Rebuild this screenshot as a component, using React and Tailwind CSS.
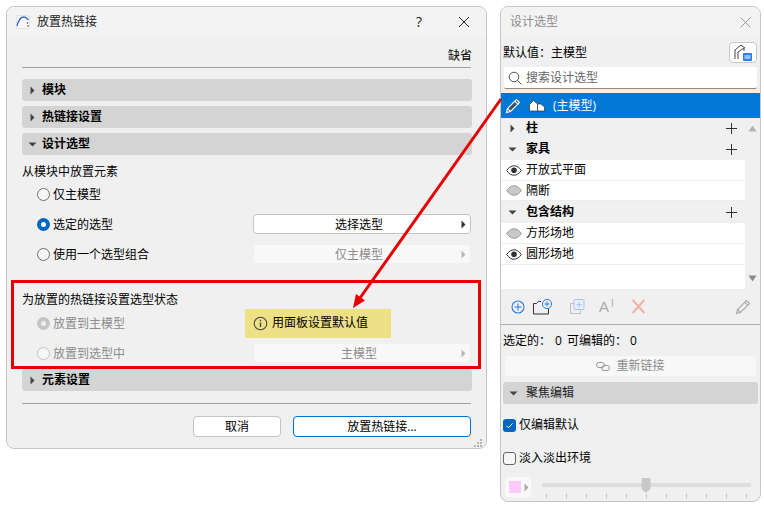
import React from 'react';

const Tri = ({ down, className = 'fill-[#444]' }) => (
  <svg width="9" height="9" viewBox="0 0 9 9" className={`shrink-0 ${className}`}>
    {down ? <path d="M0.5 2.5h8L4.5 6.5z" /> : <path d="M2.5 0.5v8L6.5 4.5z" />}
  </svg>
);

const Section = ({ title, down }) => (
  <div className="h-[22px] -mr-[1px] rounded-[3px] bg-[#d4d4d4] flex items-center pl-[6px] gap-[5px] font-bold text-black">
    <Tri down={down} />
    <span>{title}</span>
  </div>
);

const Radio = ({ checked, disabled, filled, label }) => (
  <div className={`flex items-center gap-[3px] pl-[15px] ${disabled ? 'text-[#8c8c8c]' : 'text-black'}`}>
    {checked ? (
      <span className="w-[13px] h-[13px] rounded-full bg-[#0067c0] flex items-center justify-center">
        <span className="w-[5px] h-[5px] rounded-full bg-white" />
      </span>
    ) : filled ? (
      <span className="w-[13px] h-[13px] rounded-full bg-[#c4c4c4] flex items-center justify-center">
        <span className="w-[5px] h-[5px] rounded-full bg-[#eeeeee]" />
      </span>
    ) : (
      <span className={`w-[13px] h-[13px] rounded-full border bg-[#f6f6f6] ${disabled ? 'border-[#c4c4c4]' : 'border-[#6e6e6e]'}`} />
    )}
    <span className="pt-[1px]">{label}</span>
  </div>
);

const Picker = ({ label, disabled }) => (
  <div
    className={`w-[218px] h-[20px] rounded-[4px] border flex items-center relative justify-center ${
      disabled ? 'bg-[#f8f8f8] border-[#f0f0f0] text-[#8c8c8c]' : 'bg-white border-[#c4c4c4] text-black'
    }`}
  >
    <span className="pr-[6px] pt-[1px]">{label}</span>
    <span className="absolute right-[2px] top-[5px]">
      <Tri className={disabled ? 'fill-[#b8b8b8]' : 'fill-[#333]'} />
    </span>
  </div>
);

const Eye = () => (
  <svg width="16" height="11" viewBox="0 0 16 11" fill="none" className="shrink-0">
    <path d="M0.7 5.5C3 2 5.5 0.8 8 0.8s5 1.2 7.3 4.7C13 9 10.5 10.2 8 10.2S3 9 0.7 5.5z" stroke="#333" strokeWidth="1" fill="#fff" />
    <circle cx="8" cy="5.3" r="2.8" fill="#333" />
  </svg>
);

const EyeOff = () => (
  <svg width="16" height="11" viewBox="0 0 16 11" className="shrink-0">
    <path d="M0.7 5.5C3 2 5.5 0.8 8 0.8s5 1.2 7.3 4.7C13 9 10.5 10.2 8 10.2S3 9 0.7 5.5z" stroke="#9a9a9a" strokeWidth="1" fill="#c8c8c8" />
  </svg>
);

const Plus = () => (
  <svg width="11" height="11" viewBox="0 0 11 11" stroke="#333" strokeWidth="1" className="shrink-0">
    <path d="M5.5 0v11M0 5.5h11" />
  </svg>
);

const GroupRow = ({ title, down, h }) => (
  <div className={`flex items-center bg-[#f0f0f0] font-bold text-black pl-[7px] pr-[8px] ${h}`}>
    <Tri down={down} />
    <span className="ml-[9px] flex-1">{title}</span>
    <Plus />
  </div>
);

const ItemRow = ({ title, on, h }) => (
  <div className={`flex items-center bg-white border-b border-[#ececec] text-black pl-[5px] ${h}`}>
    {on ? <Eye /> : <EyeOff />}
    <span className="ml-[4px]">{title}</span>
  </div>
);

const Pencil = ({ color = '#fff', fill = 'none' }) => (
  <svg width="16" height="16" viewBox="0 0 16 16" fill={fill} stroke={color} strokeWidth="1.1" className="shrink-0">
    <path d="M1.5 14.5l1-4L11.5 1.5l3 3-9 9z" />
    <path d="M9.8 3.2l3 3M2.5 10.5l3 3" />
  </svg>
);

export default function App() {
  return (
    <div className="relative w-[764px] h-[507px] overflow-hidden bg-white flex items-start gap-[13px] pt-[6px] pl-[6px] text-[12px] leading-[16px] font-['Open_Sans','Noto_Sans_CJK_SC',sans-serif]">
      {/* dialog */}
      <div className="w-[481px] h-[443px] shrink-0 rounded-[8px] border border-[#c6c6c6] bg-[#f0f0f0] overflow-hidden flex flex-col">
        <div className="h-[30px] bg-[#f3f3f3] flex items-center pl-[9px] pr-[16px]">
          <svg width="14" height="14" viewBox="0 0 14 14" fill="none" className="shrink-0">
            <rect x="0.5" y="0.5" width="13" height="13" rx="1.5" fill="#fafafa" stroke="#e2e2e2" />
            <path d="M1 11C2.5 5 5 2 8 2c2.5 0 3.5 2 4.5 3" stroke="#3a66c8" strokeWidth="1.3" />
            <circle cx="11.5" cy="8" r="0.7" fill="#222" />
            <circle cx="12" cy="11" r="0.7" fill="#222" />
          </svg>
          <span className="ml-[7px] flex-1 text-[#222]">放置热链接</span>
          <span className="text-[14px] text-[#222] mr-[36px]">?</span>
          <svg width="12" height="12" viewBox="0 0 12 12" stroke="#222" strokeWidth="1">
            <path d="M1 1l10 10M11 1L1 11" />
          </svg>
        </div>
        <div className="flex-1 flex flex-col px-[15px] min-h-0">
          <div className="h-[31px] shrink-0 border-b border-[#a0a0a0] flex items-end justify-end pb-[3px] text-black">
            <span className="-mr-[1px]">缺省</span>
          </div>
          <div className="mt-[11px] flex flex-col gap-[5px]">
            <Section title="模块" />
            <Section title="热链接设置" />
            <Section title="设计选型" down />
          </div>
          <div className="mt-[9px] h-[15px] text-black">从模块中放置元素</div>
          <div className="h-[30px] flex items-center">
            <Radio label="仅主模型" />
          </div>
          <div className="h-[30px] flex items-center justify-between">
            <Radio checked label="选定的选型" />
            <Picker label="选择选型" />
          </div>
          <div className="h-[30px] flex items-center justify-between">
            <Radio label="使用一个选型组合" />
            <Picker label="仅主模型" disabled />
          </div>
          <div className="mt-[23px] h-[16px] text-black">为放置的热链接设置选型状态</div>
          <div className="h-[30px] flex items-center">
            <div className="w-[223px] shrink-0">
              <Radio filled disabled label="放置到主模型" />
            </div>
            <div className="w-[146px] h-[29px] bg-[#eee084] flex items-center pl-[8px] gap-[4px] text-black">
              <svg width="15" height="15" viewBox="0 0 15 15" fill="none" stroke="#444" strokeWidth="1.1" className="shrink-0">
                <circle cx="7.5" cy="7.5" r="6.3" />
                <path d="M7.5 6.5v4.5" strokeWidth="1.4" />
                <path d="M7.5 3.8v1.5" strokeWidth="1.4" />
              </svg>
              <span>用面板设置默认值</span>
            </div>
          </div>
          <div className="h-[30px] flex items-center justify-between">
            <Radio disabled label="放置到选型中" />
            <Picker label="主模型" disabled />
          </div>
          <div className="mt-[1px]">
            <Section title="元素设置" />
          </div>
          <div className="mt-[12px] border-t border-[#a0a0a0]" />
          <div className="mt-[12px] flex justify-end gap-[12px] text-black">
            <div className="w-[88px] h-[21px] rounded-[4px] border border-[#c4c4c4] bg-white flex items-center justify-center">取消</div>
            <div className="w-[178px] h-[21px] rounded-[4px] border border-[#0073cf] bg-white flex items-center justify-center">放置热链接...</div>
          </div>
          <div className="flex justify-end -mr-[12px] mt-[2px]">
            <svg width="9" height="9" viewBox="0 0 9 9" fill="#b4b4b4">
              <rect x="6" y="0" width="2" height="2" />
              <rect x="3" y="3" width="2" height="2" />
              <rect x="6" y="3" width="2" height="2" />
              <rect x="0" y="6" width="2" height="2" />
              <rect x="3" y="6" width="2" height="2" />
              <rect x="6" y="6" width="2" height="2" />
            </svg>
          </div>
        </div>
      </div>

      {/* panel */}
      <div className="w-[261px] h-[496px] shrink-0 rounded-[8px] border border-[#c6c6c6] bg-[#f0f0f0] overflow-hidden flex flex-col">
        <div className="h-[30px] shrink-0 bg-[#f3f3f3] flex items-center pl-[9px] pr-[9px] text-[#8c8c8c]">
          <span className="flex-1">设计选型</span>
          <svg width="11" height="11" viewBox="0 0 11 11" stroke="#999" strokeWidth="1">
            <path d="M0.5 0.5l10 10M10.5 0.5l-10 10" />
          </svg>
        </div>
        <div className="h-[5px] shrink-0" />
        <div className="h-[21px] shrink-0 flex items-center justify-between pl-[2px] pr-[3px] text-black">
          <span>默认值：主模型</span>
          <div className="w-[28px] h-[21px] rounded-[4px] border border-[#c8c8c8] bg-white flex items-center justify-center">
            <svg width="18" height="17" viewBox="0 0 18 17" fill="none">
              <path d="M1 15V6l6-5 4 3" stroke="#444" />
              <path d="M4 15V8l6-4v3" stroke="#444" />
              <rect x="9" y="9" width="9" height="8" rx="1" fill="#2b7de9" />
              <path d="M10.5 12h6M10.5 14h6" stroke="#fff" />
            </svg>
          </div>
        </div>
        <div className="h-[4px] shrink-0" />
        <div className="mx-[3px] h-[22px] shrink-0 bg-white border-b border-[#8a8a8a] rounded-[2px] flex items-center pl-[4px] gap-[4px] text-[#666]">
          <svg width="14" height="14" viewBox="0 0 14 14" fill="none" stroke="#555" strokeWidth="1" className="shrink-0">
            <circle cx="6" cy="6" r="4.8" />
            <path d="M9.5 9.5l4 4" />
          </svg>
          <span>搜索设计选型</span>
        </div>
        <div className="h-[4px] shrink-0" />
        <div className="h-[25px] shrink-0 bg-[#0078d4] flex items-center pl-[4px] text-white">
          <Pencil fill="#34506a" />
          <svg width="16" height="12" viewBox="0 0 16 12" className="ml-[8px] shrink-0" fill="#fff" stroke="#333" strokeWidth="0.7">
            <path d="M0.5 11V4.5L4.5 0.5 8.5 4v7z" />
            <path d="M8.5 11V4h3.5l3.5 3v4z" />
          </svg>
          <span className="ml-[8px]">(主模型)</span>
        </div>
        <div className="h-[171px] shrink-0 flex">
          <div className="flex-1 bg-white flex flex-col">
            <GroupRow title="柱" h="h-[20px]" />
            <GroupRow title="家具" down h="h-[22px]" />
            <ItemRow title="开放式平面" on h="h-[21px]" />
            <ItemRow title="隔断" h="h-[20px]" />
            <GroupRow title="包含结构" down h="h-[22px]" />
            <ItemRow title="方形场地" h="h-[21px]" />
            <ItemRow title="圆形场地" on h="h-[21px]" />
          </div>
          <div className="w-[15px] bg-[#f0f0f0] flex flex-col items-center justify-between py-[7px]">
            <svg width="9" height="7" viewBox="0 0 9 7" fill="#b4b4b4"><path d="M0.5 6.5L4.5 0.5l4 6z" /></svg>
            <svg width="9" height="7" viewBox="0 0 9 7" fill="#8a8a8a"><path d="M0.5 0.5L4.5 6.5l4-6z" /></svg>
          </div>
        </div>
        <div className="h-[36px] shrink-0 border-b border-[#b0b0b0] flex items-center pl-[10px] pr-[9px]">
          <svg width="14" height="14" viewBox="0 0 14 14" fill="none" stroke="#2b7de9" strokeWidth="1.1" className="shrink-0">
            <circle cx="7" cy="7" r="6" />
            <path d="M7 3.5v7M3.5 7h7" />
          </svg>
          <svg width="20" height="16" viewBox="0 0 20 16" fill="none" className="ml-[8px] shrink-0">
            <path d="M0.5 15V4.5h3l2-2H8M0.5 15h15V7" stroke="#333" strokeWidth="1" />
            <circle cx="14" cy="5" r="4.6" stroke="#2b7de9" fill="#f0f0f0" />
            <path d="M14 2.5v5M11.5 5h5" stroke="#2b7de9" />
          </svg>
          <svg width="15" height="15" viewBox="0 0 15 15" fill="none" className="ml-[17px] shrink-0">
            <path d="M0.5 4.5h3M0.5 4.5v10h10v-3" stroke="#bdbdbd" />
            <rect x="4" y="0.5" width="10" height="10" rx="1" stroke="#a8c4ec" fill="#e8eef6" />
            <path d="M9 3v5.5M6.2 5.7h5.6" stroke="#a8c4ec" />
          </svg>
          <span className="ml-[14px] w-[17px] flex items-start text-[#aaa] text-[15px] leading-[15px] font-['Liberation_Sans',sans-serif] shrink-0">
            A<span className="text-[10px] leading-[10px] ml-[2px]">I</span>
          </span>
          <svg width="13" height="15" viewBox="0 0 13 15" stroke="#f4b0a6" strokeWidth="2" className="ml-[16px] shrink-0">
            <path d="M0.7 1l11.6 13M12.3 1L0.7 14" />
          </svg>
          <div className="flex-1" />
          <Pencil color="#a8a8a8" />
        </div>
        <div className="h-[31px] shrink-0 flex items-center pl-[2px] text-black">
          <span>选定的：</span>
          <span className="ml-[4px]">0</span>
          <span className="ml-[5px]">可编辑的：</span>
          <span className="ml-[3px]">0</span>
        </div>
        <div className="mx-[4px] h-[20px] shrink-0 rounded-[4px] bg-[#f8f8f8] flex items-center justify-center gap-[6px] text-[#8c8c8c]">
          <svg width="14" height="9" viewBox="0 0 14 9" fill="none" stroke="#999">
            <rect x="0.5" y="0.5" width="8" height="5" rx="2.5" />
            <rect x="5.5" y="3.5" width="8" height="5" rx="2.5" />
          </svg>
          <span>重新链接</span>
        </div>
        <div className="mx-[2px] mt-[6px] h-[22px] shrink-0 rounded-[3px] bg-[#d4d4d4] flex items-center pl-[6px] gap-[8px] text-[#222]">
          <Tri down />
          <span>聚焦编辑</span>
        </div>
        <div className="h-[14px] shrink-0" />
        <div className="h-[14px] shrink-0 flex items-center pl-[2px] gap-[3px] text-black">
          <span className="w-[13px] h-[13px] rounded-[3px] bg-[#0067c0] flex items-center justify-center">
            <svg width="9" height="9" viewBox="0 0 9 9" fill="none" stroke="#fff" strokeWidth="1">
              <path d="M1.5 4.8l2 2 4-4.4" />
            </svg>
          </span>
          <span>仅编辑默认</span>
        </div>
        <div className="h-[19px] shrink-0" />
        <div className="h-[14px] shrink-0 flex items-center pl-[2px] gap-[3px] text-black">
          <span className="w-[13px] h-[13px] rounded-[3px] border border-[#666] bg-[#f6f6f6]" />
          <span>淡入淡出环境</span>
        </div>
        <div className="mt-[12px] flex items-start pl-[4px]">
          <div className="w-[26px] h-[20px] rounded-[4px] bg-[#f8f8f8] flex items-center pl-[4px] gap-[1px] shrink-0">
            <span className="w-[12px] h-[12px] bg-[#fccbfc]" />
            <Tri className="fill-[#aaa]" />
          </div>
          <div className="relative ml-[11px] w-[209px] h-[21px]">
            <div className="absolute left-0 right-0 top-[6px] h-[4px] bg-[#dcdfdc]" />
            <svg width="10" height="15" viewBox="0 0 10 15" fill="#c8c8c8" className="absolute left-[99px] top-[1px]">
              <path d="M0.5 0h9v11L5 15 0.5 11z" />
            </svg>
            <div className="absolute left-[4px] right-[4px] top-[17px] flex justify-between">
              {Array.from({ length: 11 }).map((_, i) => (
                <span key={i} className="w-px h-[4px] bg-[#bdbdbd]" />
              ))}
            </div>
          </div>
        </div>
      </div>

      {/* annotations */}
      <div className="absolute left-[11px] top-[280px] w-[470px] h-[89px] border-[3px] border-[#e60000] pointer-events-none" />
      <svg width="764" height="507" viewBox="0 0 764 507" className="absolute left-0 top-0 pointer-events-none">
        <path d="M501 99L360 298" stroke="#e60000" strokeWidth="3" fill="none" />
        <path d="M353 308l3-14 9 6.5z" fill="#e60000" />
      </svg>
    </div>
  );
}
